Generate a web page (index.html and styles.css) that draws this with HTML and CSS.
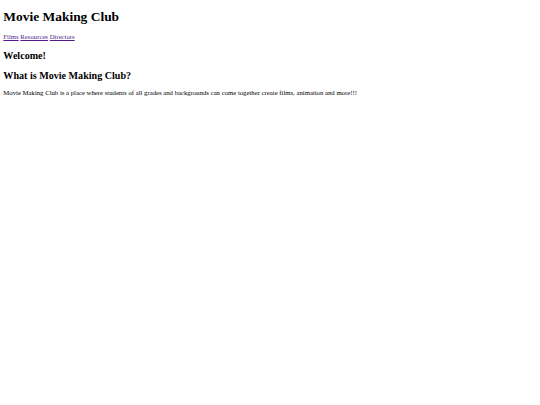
FILE: index.html
```html
<!DOCTYPE html>
<html>
<head>
<meta charset="utf-8">
<title>Movie Making Club</title>
<link rel="stylesheet" href="styles.css">
</head>
<body class="page">
<h1 class="title">Movie Making Club</h1>
<nav class="nav"><a class="link" href="#films">Films</a> <a class="link" href="#resources">Resources</a> <a class="link" href="#directors">Directors</a></nav>
<h2 class="heading">Welcome!</h2>
<h2 class="heading heading-last">What is Movie Making Club?</h2>
<p class="text">Movie Making Club is a place where students of all grades and backgrounds can come together create films, animation and more!!!</p>
</body>
</html>
```
FILE: styles.css
```css
.page {
  margin: 3.36px;
  font-family: "Liberation Serif", serif;
  font-size: 6.72px;
  color: #000;
  background: #fff;
}
.title {
  font-size: 13.44px;
  font-weight: bold;
  margin: 6px 0 8px;
}
.nav {
  margin: 0;
}
.link {
  color: #551a8b;
  text-decoration: underline;
}
.heading {
  font-size: 10.08px;
  font-weight: bold;
  margin: 9.4px 0;
}
.heading-last {
  margin-bottom: 7.4px;
}
.text {
  margin: 6.72px 0;
}
```
